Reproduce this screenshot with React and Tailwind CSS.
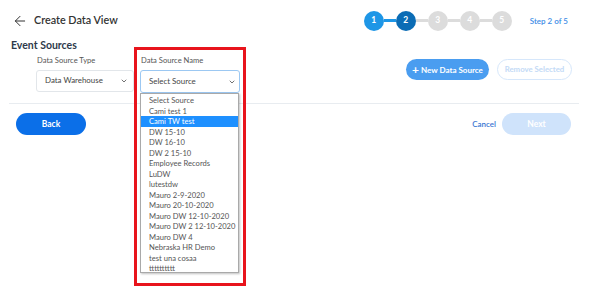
import React from 'react';
import { ArrowLeft, ChevronDown } from 'lucide-react';

const sources = [
  'Select Source', 'Cami test 1', 'Cami TW test', 'DW 15-10', 'DW 16-10', 'DW 2 15-10',
  'Employee Records', 'LuDW', 'lutestdw', 'Mauro 2-9-2020', 'Mauro 20-10-2020',
  'Mauro DW 12-10-2020', 'Mauro DW 2 12-10-2020', 'Mauro DW 4', 'Nebraska HR Demo',
  'test una cosaa', 'tttttttttt',
];

const Stepper = () => (
  <div className="flex items-center">
    {[1, 2, 3, 4, 5].map((n, i) => (
      <React.Fragment key={n}>
        {i > 0 && <div className={`w-[12px] h-[3px] ${n <= 2 ? 'bg-[#1e96e6]' : 'bg-[#dcdcdc]'}`} />}
        <div
          className={`w-[20px] h-[20px] rounded-full flex items-center justify-center text-[8.5px] font-bold text-white ${
            n === 1 ? 'bg-[#1e96e6]' : n === 2 ? 'bg-[#0b6cb5]' : 'bg-[#dcdcdc]'
          }`}
        >
          {n}
        </div>
      </React.Fragment>
    ))}
    <span className="ml-[18px] text-[8px] text-[#3c8ce6] font-semibold">Step 2 of 5</span>
  </div>
);

export default function App() {
  return (
    <div className="relative w-[589px] h-[288px] bg-white overflow-hidden font-['Lato',sans-serif] text-[#333]">
      {/* header */}
      <div className="flex items-center justify-between h-[39px] pl-[12px] pr-[21px] pt-[2px]">
        <div className="flex items-center gap-[6px]">
          <ArrowLeft size={16} strokeWidth={1.5} className="text-[#333]" />
          <span className="text-[10.8px] font-semibold text-[#333]">Create Data View</span>
        </div>
        <Stepper />
      </div>

      <div className="pl-[11px] h-[14px] flex items-center text-[10.5px] font-bold text-[#2e3a4b]">Event Sources</div>

      {/* form row */}
      <div className="flex items-start pl-[36px] pr-[17px] mt-[2px]">
        <div className="w-[98px]">
          <div className="h-[12px] flex items-center pl-[1px] text-[7.6px] text-[#555]">Data Source Type</div>
          <div className="mt-[3px] h-[22px] border border-[#e2e6ea] rounded-[3px] flex items-center justify-between pl-[8px] pr-[5px] text-[7.9px] text-[#444]">
            Data Warehouse
            <ChevronDown size={8} strokeWidth={2.5} className="text-[#555]" />
          </div>
        </div>

        <div className="relative w-[100px] ml-[6px]">
          <div className="h-[12px] flex items-center pl-[1px] text-[7.6px] text-[#555]">Data Source Name</div>
          <div className="mt-[3px] h-[23px] border border-[#9cc8f2] rounded-[3px] flex items-center justify-between pl-[8px] pr-[3px] text-[7.9px] text-[#444]">
            Select Source
            <ChevronDown size={8} strokeWidth={2.5} className="text-[#555]" />
          </div>

          {/* open listbox */}
          <div className="absolute left-0 top-[38px] w-[99px] h-[180px] bg-white border border-[#a9a9a9] shadow-[1px_1px_2px_rgba(0,0,0,0.25)] py-[1px] z-10">
            {sources.map((s, i) => (
              <div
                key={s}
                className={`h-[10.5px] leading-[10.5px] pl-[8px] text-[7.6px] whitespace-nowrap ${
                  i === 2 ? 'bg-[#1e90ff] text-white' : 'text-[#555]'
                }`}
              >
                {s}
              </div>
            ))}
          </div>

          {/* highlight frame */}
          <div className="absolute left-[-6px] top-[-8px] w-[112px] h-[239px] border-[3px] border-[#e8141c] z-20 pointer-events-none" />
        </div>

        <div className="ml-auto flex items-center gap-[8px] mt-[4px]">
          <button className="h-[21px] w-[83px] rounded-full bg-[#4a9df0] text-white text-[8px] font-bold flex items-center justify-center gap-[2px]">
            <span className="text-[12px] leading-none font-bold">+</span> New Data Source
          </button>
          <button className="h-[21px] w-[75px] rounded-full border border-[#d6e7fb] text-[#c3daf6] text-[7.8px] font-bold">
            Remove Selected
          </button>
        </div>
      </div>

      <div className="mt-[10px] ml-[9px] mr-[10px] border-t border-[#e8ecf0]" />

      {/* footer */}
      <div className="flex items-center justify-between pl-[16px] pr-[18px] mt-[9px]">
        <button className="h-[22px] w-[70px] rounded-full bg-[#0b6fe8] text-white text-[8.5px] font-bold">Back</button>
        <div className="flex items-center gap-[6px]">
          <span className="text-[8px] text-[#3a76d2] font-semibold">Cancel</span>
          <button className="h-[22px] w-[69px] rounded-full bg-[#cfe3fb] text-white text-[8.5px] font-bold">Next</button>
        </div>
      </div>
    </div>
  );
}
